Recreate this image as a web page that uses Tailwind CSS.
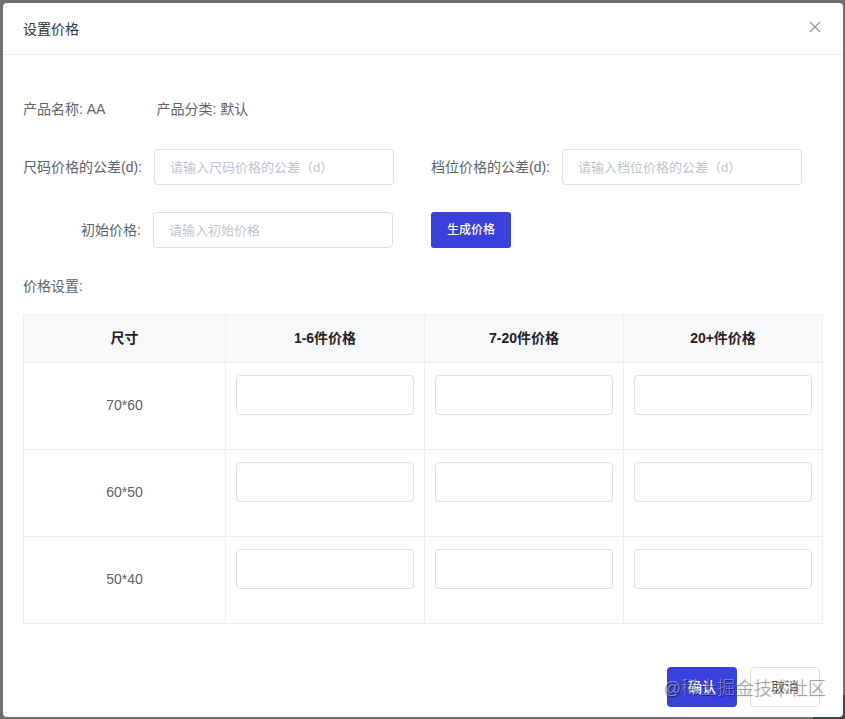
<!DOCTYPE html>
<html lang="zh-CN">
<head>
    <meta charset="UTF-8">
    <meta name="viewport" content="width=device-width, initial-scale=1.0">
    <title>设置价格</title>
    <script src="https://cdn.jsdelivr.net/npm/@tailwindcss/browser@4"></script>
    <style> body { font-family: 'Liberation Sans', 'Noto Sans CJK SC', sans-serif; } </style>
</head>
<body class="relative min-h-screen flex bg-[#707070] pt-[3px] pl-[3px] pr-[2px] pb-[2px] text-sm text-[#606266]">
    <!-- floating button of the page behind the dialog -->
    <div class="absolute right-0 bottom-0 w-8 h-6 rounded-tl-full bg-[#3e464a]"></div>

    <div role="dialog" aria-labelledby="dialog-title" class="relative flex-1 flex flex-col bg-white rounded">
        <header class="flex items-center justify-between h-13 px-5 border-b border-[#ebedf0]">
            <h1 id="dialog-title" class="text-[#303133]">设置价格</h1>
            <button type="button" aria-label="关闭" class="p-0.5 pb-1.5 text-[#909399]">
                <svg class="size-3" viewBox="0 0 12 12" fill="none" stroke="currentColor" stroke-width="1.1"><path d="M1 1l10 10M11 1L1 11"/></svg>
            </button>
        </header>

        <form class="flex-1 flex flex-col">
            <div class="px-5 pt-11">
                <div class="flex gap-[51px]">
                    <p>产品名称: AA</p>
                    <p>产品分类: 默认</p>
                </div>

                <div class="grid grid-cols-2 gap-x-4 gap-y-[27px] mt-[30px]">
                    <div class="flex items-center gap-3">
                        <label for="size-diff" class="w-[119px] text-right whitespace-nowrap">尺码价格的公差(d):</label>
                        <input id="size-diff" type="text" placeholder="请输入尺码价格的公差（d）" class="w-60 h-9 px-[15px] rounded border border-[#dcdfe6] text-[13px] placeholder:text-[#c0c4cc]">
                    </div>
                    <div class="flex items-center gap-3">
                        <label for="level-diff" class="w-[119px] text-right whitespace-nowrap">档位价格的公差(d):</label>
                        <input id="level-diff" type="text" placeholder="请输入档位价格的公差（d）" class="w-60 h-9 px-[15px] rounded border border-[#dcdfe6] text-[13px] placeholder:text-[#c0c4cc]">
                    </div>
                    <div class="flex items-center gap-3">
                        <label for="base-price" class="w-[118px] text-right whitespace-nowrap">初始价格:</label>
                        <input id="base-price" type="text" placeholder="请输入初始价格" class="w-60 h-9 px-[15px] rounded border border-[#dcdfe6] text-[13px] placeholder:text-[#c0c4cc]">
                    </div>
                    <div>
                        <button type="button" class="block w-20 h-9 rounded-[3px] bg-[#3a40dc] text-xs font-medium text-white">生成价格</button>
                    </div>
                </div>

                <h2 class="mt-7">价格设置:</h2>

                <table class="w-full mt-[18px] table-fixed border-collapse text-center">
                    <thead class="bg-[#f7f8fa] text-[#1f2225]">
                        <tr class="h-12">
                            <th class="w-[202px] pb-0.5 border border-[#ebeef2] font-bold">尺寸</th>
                            <th class="pb-0.5 border border-[#ebeef2] font-bold">1-6件价格</th>
                            <th class="pb-0.5 border border-[#ebeef2] font-bold">7-20件价格</th>
                            <th class="pb-0.5 border border-[#ebeef2] font-bold">20+件价格</th>
                        </tr>
                    </thead>
                    <tbody id="price-rows"></tbody>
                </table>
            </div>

            <footer class="flex justify-end gap-[13px] mt-auto pt-10 pl-5 pr-[23px] pb-2.5">
                <button type="submit" class="w-[70px] h-10 rounded bg-[#3a40dc] font-medium text-white">确认</button>
                <button type="button" class="w-[70px] h-10 rounded border border-[#dcdfe6] bg-white">取消</button>
            </footer>
        </form>

        <span class="absolute right-[18px] bottom-[15px] text-lg font-light whitespace-nowrap pointer-events-none text-white/40 text-shadow-[1px_1px_1px_#00000090]">@稀土掘金技术社区</span>
    </div>

    <script>
        const sizes = ['70*60', '60*50', '50*40'];
        const levels = ['1-6件', '7-20件', '20+件'];
        document.getElementById('price-rows').innerHTML = sizes.map(size => `
            <tr>
                <td class="pb-0.5 border border-[#ebeef2]">${size}</td>
                ${levels.map(level => `
                <td class="border border-[#ebeef2] px-2.5 pt-3 pb-[34px]">
                    <input type="text" aria-label="${size} ${level}价格" class="block w-full h-10 px-[15px] rounded border border-[#dcdfe6]">
                </td>`).join('')}
            </tr>`).join('');
    </script>
</body>
</html>
